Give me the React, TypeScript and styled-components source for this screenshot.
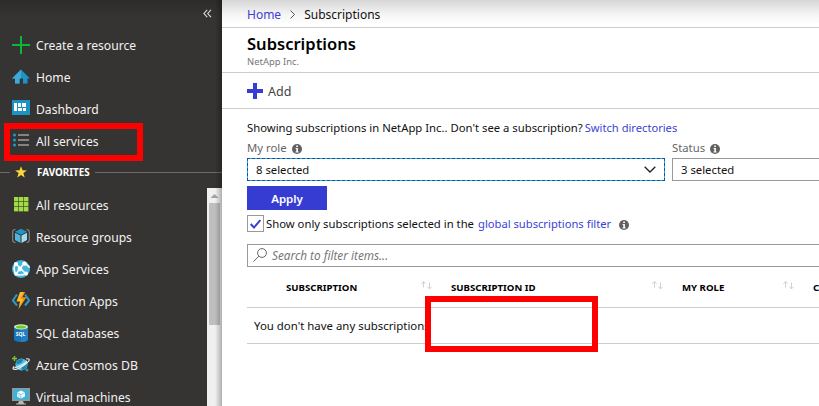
import React from "react";
import styled, { createGlobalStyle } from "styled-components";

const GlobalStyle = createGlobalStyle`
  * { box-sizing: border-box; }
  body { margin: 0; overflow: hidden; background: #fff; }
  svg { display: block; flex: none; }
`;

const Page = styled.div`
  position: relative;
  display: flex;
  width: 819px;
  height: 406px;
  overflow: hidden;
  background: #fff;
  color: #111;
  font-family: "Noto Sans", "Open Sans", sans-serif;
  font-size: 11.3px;
  white-space: nowrap;
`;

/* Sidebar */
const Sidebar = styled.nav`
  position: relative;
  flex: none;
  width: 222px;
  height: 406px;
  display: flex;
  flex-direction: column;
  background: #363432;
  color: #f2f2f2;
  overflow: hidden;
`;
const EdgeShade = styled.div`
  position: absolute;
  top: 0;
  right: 0;
  width: 7px;
  height: 100%;
  background: linear-gradient(to right, rgba(0, 0, 0, 0), rgba(0, 0, 0, 0.27));
`;
const TopShade = styled.div`
  position: absolute;
  top: 0;
  left: 0;
  width: 100%;
  height: 18px;
  background: linear-gradient(rgba(0, 0, 0, 0.16), rgba(0, 0, 0, 0));
`;
const CollapseBar = styled.div`
  height: 29px;
  padding: 9px 10px 0 0;
  display: flex;
  justify-content: flex-end;
`;
const NavItem = styled.div`
  height: 32px;
  flex: none;
  display: flex;
  align-items: center;
  gap: 6px;
  padding-left: 12px;
`;
const NavLabel = styled.span<{ $size?: number }>`
  font-size: ${(p) => p.$size ?? 12.13}px;
  line-height: 18px;
  padding-top: 1px;
`;
const Favorites = styled.div`
  display: flex;
  align-items: center;
  height: 31px;
  padding-bottom: 1px;
  color: #fff;
  font-size: 9.85px;
  font-weight: 700;
`;
const Rule = styled.div<{ $width: number }>`
  width: ${(p) => p.$width}px;
  height: 1px;
  background: #6b6967;
`;
const StarSlot = styled.span`
  margin-left: 5px;
`;
const FavoritesTitle = styled.span`
  width: 58px;
  margin-left: 10px;
`;
const FavoritesBody = styled.div`
  display: flex;
  flex: 1;
  min-height: 0;
`;
const FavoritesList = styled.div`
  width: 207px;
  padding-top: 1px;
`;
const ScrollTrack = styled.div`
  width: 15px;
  height: 218px;
  display: flex;
  flex-direction: column;
  align-items: flex-start;
  padding: 6px 0 0 2px;
  background: #f0f0f0;
`;
const ScrollThumb = styled.div`
  width: 11px;
  height: 122px;
  margin-top: 5px;
  background: #bfbfbf;
`;

/* Main area */
const Main = styled.main`
  flex: 1;
  min-width: 0;
  display: flex;
  flex-direction: column;
  overflow: hidden;
`;
const Breadcrumb = styled.div`
  height: 28px;
  display: flex;
  align-items: center;
  padding: 2px 0 0 25px;
  border-bottom: 1px solid #cdcdcd;
  background: linear-gradient(#d6d6d6, #f4f4f4 14px, #fff 24px);
  font-size: 12px;
  color: #111;
`;
const Link = styled.a`
  color: #3b3fd4;
`;
const Crumb = styled.span`
  margin-left: 9px;
`;
const CrumbArrow = styled.span`
  margin-left: 9px;
`;
const Heading = styled.header`
  height: 45px;
  padding: 3px 0 0 25px;
  border-bottom: 1px solid #cdcdcd;
`;
const Title = styled.h1`
  margin: 0;
  font-size: 16.55px;
  line-height: 26px;
  font-weight: 600;
  color: #000;
`;
const Subtitle = styled.div`
  font-size: 9.45px;
  line-height: 13px;
  color: #777;
  margin-top: -2px;
`;
const Toolbar = styled.div`
  height: 36px;
  display: flex;
  align-items: center;
  gap: 5px;
  padding-left: 25px;
  border-bottom: 1px solid #cdcdcd;
  font-size: 12.5px;
  color: #444;
`;
const ToolbarLabel = styled.span`
  padding-top: 2px;
`;
const Content = styled.section`
  padding: 9px 0 0 25px;
`;
const Notice = styled.p`
  margin: 0;
  height: 20px;
  line-height: 19px;
  display: flex;
  gap: 2px;
`;
const NoticeLink = styled(Link)`
  font-size: 11.15px;
`;
const Filters = styled.div`
  display: flex;
  gap: 7px;
`;
const Field = styled.div`
  flex: none;
  width: 418px;
`;
const FieldLabel = styled.div`
  height: 20px;
  padding-bottom: 1px;
  display: flex;
  align-items: center;
  gap: 5px;
  color: #666;
`;
const SelectBox = styled.div<{ $focused?: boolean }>`
  height: 23px;
  display: flex;
  align-items: center;
  justify-content: space-between;
  padding: 0 8px;
  border: 1px ${(p) => (p.$focused ? "dashed #1b4f9c" : "solid #999")};
  background: ${(p) => (p.$focused ? "linear-gradient(#fff, #fff) padding-box, #14b8ee border-box" : "#fff")};
  color: #111;
`;
const ApplyButton = styled.button`
  display: flex;
  align-items: center;
  justify-content: center;
  width: 80px;
  height: 24px;
  margin: 5px 0 0;
  padding: 0;
  border: 0;
  background: #363cd2;
  color: #fff;
  font: 600 11.5px "Noto Sans", sans-serif;
`;
const CheckRow = styled.div`
  display: flex;
  align-items: center;
  height: 17px;
  margin-top: 5px;
`;
const Checkbox = styled.span`
  width: 17px;
  height: 17px;
  display: flex;
  align-items: center;
  justify-content: center;
  border: 1px solid #999;
  margin-right: 2px;
`;
const FilterLink = styled(Link)`
  margin: 0 8px 0 4px;
  font-size: 11.2px;
`;
const InfoSlot = styled.span`
  padding-top: 2px;
`;
const SearchBox = styled.div`
  height: 23px;
  display: flex;
  align-items: center;
  gap: 5px;
  margin-top: 12px;
  padding: 0 0 1px 5px;
  border: 1px solid #999;
  border-right: 0;
  color: #777;
  font-size: 11.75px;
  font-style: italic;
`;
const TableHead = styled.div`
  display: grid;
  grid-template-columns: 204px 231px 131px 60px;
  align-items: center;
  width: 626px;
  height: 41px;
  border-bottom: 1px solid #cdcdcd;
  font-size: 9.65px;
  font-weight: 700;
  color: #000;
`;
const HeadCell = styled.div<{ $indent?: number }>`
  display: flex;
  justify-content: space-between;
  align-items: center;
  padding: 0 19px 0 ${(p) => p.$indent ?? 0}px;
`;
const SortSlot = styled.span`
  padding-bottom: 3px;
`;
const TableRow = styled.div`
  height: 36px;
  display: flex;
  align-items: center;
  padding: 0 0 1px 7px;
  border-bottom: 1px solid #cdcdcd;
  font-size: 11.42px;
`;

/* Red callouts drawn over the portal */
const Callout = styled.div<{ $x: number; $y: number; $w: number; $h: number }>`
  position: absolute;
  left: ${(p) => p.$x}px;
  top: ${(p) => p.$y}px;
  width: ${(p) => p.$w}px;
  height: ${(p) => p.$h}px;
  border: 6px solid #fe0000;
`;

const Svg = ({ children }: { children: React.ReactNode }) => (
  <svg width="18" height="18" viewBox="0 0 18 18">{children}</svg>
);
const PlusIcon = () => (
  <Svg><path d="M8 0h2v8h8v2h-8v8H8v-8H0V8h8z" fill="#08b836" /></Svg>
);
const HomeIcon = () => (
  <Svg>
    <path d="M9 1.500 18 10.500H15.500V15.500H11v-5H7.500v5H3v-5H0z" fill="#1c94c4" />
    <path d="M9 1.500 0 10.500h3v5h4.500v-5H9z" fill="#3daad6" />
  </Svg>
);
const DashboardIcon = () => (
  <Svg>
    <path d="M0 0h18v15H0z" fill="#1b93c5" />
    <path d="M2 3h3v8H2zM6 3h3v4H6zM10 3h4v4h-4zM6 8h4v3H6zM11 8h3v3h-3z" fill="#fff" />
  </Svg>
);
const ServicesIcon = () => (
  <Svg>
    <path d="M6 3h11M6 8h11M6 13h11" stroke="#858381" strokeWidth="2" />
    <g fill="#1f9bcb"><circle cx="2.500" cy="3" r="1.500" /><circle cx="2.500" cy="8" r="1.500" /><circle cx="2.500" cy="13" r="1.500" /></g>
  </Svg>
);
const StarIcon = () => (
  <svg width="12" height="12" viewBox="0 0 12 12">
    <path d="m6 .2 1.500 4.100 4.400.1-3.500 2.700 1.300 4.500L6 9.100l-3.700 2.500 1.300-4.500L.1 4.400l4.400-.1z" fill="#fdd43b" />
  </svg>
);
const GridIcon = () => (
  <Svg>
    {[1, 6, 11].map((y) => [2, 7, 12].map((x) => (
      <rect key={`${x}-${y}`} x={x} y={y} width="4.400" height="4.400" fill="#a1dc42" />
    )))}
  </Svg>
);
const GroupIcon = () => (
  <Svg>
    <path d="M3.500 1.500C1.500 1.500.7 2.500.7 4v8c0 1.500.8 2.500 2.800 2.500M14.500 1.500c2 0 2.800 1 2.800 2.500v8c0 1.500-.8 2.500-2.800 2.500" fill="none" stroke="#888" strokeWidth="1.100" />
    <path d="m9 .8 6 3-6 3-6-3z" fill="#1d96c7" />
    <path d="M3 4.800 8.500 7.500V15L3 12z" fill="#4fb5dc" />
    <path d="M15 4.800 9.500 7.500V15l5.500-3z" fill="#a2dcef" />
  </Svg>
);
const AppServiceIcon = () => (
  <Svg>
    <circle cx="9" cy="9" r="9" fill="#45b5d9" />
    <g stroke="#eef9fc" fill="none" strokeWidth="1.700">
      <path d="m4 4 10 10M12.500 3 7.500 9M4 14l3.500-5M3.500 4.500C1.500 7 1.800 10 3.500 13.500M12 4c3 .2 4.500 1.800 5.500 3.700M5 14.500c3.500 1 6 .6 9-1" />
    </g>
    <g fill="#fff"><circle cx="4" cy="4" r="2.100" /><circle cx="12.500" cy="3.600" r="2.200" /><circle cx="8" cy="9" r="2.400" /><circle cx="4" cy="14" r="1.800" /><circle cx="14" cy="13.500" r="2" /></g>
  </Svg>
);
const FunctionIcon = () => (
  <Svg>
    <path d="M5 2.500.9 8.500l4.100 5M13 2.500l4.100 6-4.100 5" fill="none" stroke="#3199c4" strokeWidth="2" />
    <path d="M8 0h5l-3 5.500h4L6.500 17 8 9.500H4.500z" fill="#fdbd26" />
    <path d="M11.800 0H13l-3 5.500h4L6.500 17l5-10H8.500z" fill="#f08a20" />
  </Svg>
);
const SmallText = styled.text`
  font: 700 5px "Noto Sans", sans-serif;
  fill: #fff;
`;
const SqlIcon = () => (
  <Svg>
    <path d="M2 3v12c0 1.700 3 3 7 3s7-1.300 7-3V3z" fill="#1773ba" />
    <path d="M9 3h7v12c0 1.700-3 3-7 3z" fill="#2480c5" />
    <ellipse cx="9" cy="2.800" rx="7" ry="2.600" fill="#d3edb0" />
    <ellipse cx="9" cy="3" rx="5" ry="1.500" fill="#72c92e" />
    <SmallText x="3.700" y="12.300">SQL</SmallText>
  </Svg>
);
const CosmosIcon = () => (
  <Svg>
    <circle cx="9.500" cy="8.500" r="6.100" fill="#4fc0df" />
    <path d="M4.500 5c3-2 5-2 7-1.500L9 7 4.500 8.500zM9.500 10c2-2 4-2.500 6-2-1 4-3 6-5.500 6z" fill="#247fae" />
    <path d="M14 3c3-.7 4 .3 2.500 2.500C14.500 8 8 12.500 4 13.300c-3 .5-3.800-.5-2-3M15 5C12 8.500 7 10.800 2.500 11.600" fill="none" stroke="#dbeff5" strokeWidth="1.200" />
    <path d="M2.500 0v5M0 2.500h5" stroke="#77c72e" strokeWidth="1.400" />
    <path d="M15 12.500v3M13.500 14h3" stroke="#36aed5" strokeWidth="1" />
  </Svg>
);
const VmIcon = () => (
  <Svg>
    <path d="M0 0h18v13H0z" fill="#92999b" />
    <path d="M1.500 1.500h15v10h-15z" fill="#37b4db" />
    <path d="M7 13h4l1 2.500h2v1H4v-1h2z" fill="#b6babb" />
    <path d="m9 2.500 4 2v4l-4 2-4-2v-4z" fill="#fff" />
    <path d="m5 4.500 4 2v4l-4-2z" fill="#c8edf7" />
    <path d="m5 4.500 4 2 4-2M9 6.500v4" stroke="#62c2df" strokeWidth=".7" fill="none" />
  </Svg>
);
const InfoIcon = () => (
  <InfoSlot>
    <svg width="10" height="10" viewBox="0 0 10 10">
      <circle cx="5" cy="5" r="5" fill="#606060" />
      <path d="M4.200 1.500h1.700v1.500H4.200zM3.600 4h2.300v3.500h.7v1H3.500v-1h.8V5h-.7z" fill="#fff" />
    </svg>
  </InfoSlot>
);
const SortIcon = () => (
  <SortSlot>
    <svg width="11" height="9" viewBox="0 0 11 9">
      <path d="M2.500 6.500V.7M.3 2.800 2.500.6l2.200 2.200M8.500 1.500v6.300M6.300 5.700l2.200 2.200 2.200-2.200" fill="none" stroke="#d0d0d0" strokeWidth="1" />
    </svg>
  </SortSlot>
);

const primary: [string, React.FC][] = [
  ["Create a resource", PlusIcon],
  ["Home", HomeIcon],
  ["Dashboard", DashboardIcon],
  ["All services", ServicesIcon],
];
const favorites: [string, React.FC, number?][] = [
  ["All resources", GridIcon],
  ["Resource groups", GroupIcon],
  ["App Services", AppServiceIcon, 12.25],
  ["Function Apps", FunctionIcon, 12.25],
  ["SQL databases", SqlIcon, 12.05],
  ["Azure Cosmos DB", CosmosIcon, 12.25],
  ["Virtual machines", VmIcon, 12.05],
];

export default function App() {
  return (
    <>
      <GlobalStyle />
      <Page>
        <Sidebar>
          <CollapseBar>
            <svg width="9" height="9" viewBox="0 0 9 9">
              <path d="M4.200.8.900 4.500l3.300 3.700M8 .8 4.700 4.500 8 8.200" fill="none" stroke="#e8e8e8" strokeWidth="1.100" />
            </svg>
          </CollapseBar>
          {primary.map(([label, Icon]) => (
            <NavItem key={label}><Icon /><NavLabel>{label}</NavLabel></NavItem>
          ))}
          <Favorites>
            <Rule $width={10} />
            <StarSlot><StarIcon /></StarSlot>
            <FavoritesTitle>FAVORITES</FavoritesTitle>
            <Rule $width={127} />
          </Favorites>
          <FavoritesBody>
            <FavoritesList>
              {favorites.map(([label, Icon, size]) => (
                <NavItem key={label}><Icon /><NavLabel $size={size}>{label}</NavLabel></NavItem>
              ))}
            </FavoritesList>
            <ScrollTrack>
              <svg width="11" height="4" viewBox="0 0 11 4"><path d="m5.500 0 4 4h-8z" fill="#a3a3a3" /></svg>
              <ScrollThumb />
            </ScrollTrack>
          </FavoritesBody>
          <EdgeShade />
          <TopShade />
        </Sidebar>
        <Main>
          <Breadcrumb>
            <Link>Home</Link>
            <CrumbArrow>
              <svg width="5" height="9" viewBox="0 0 5 9"><path d="m.5.500 4 4-4 4" fill="none" stroke="#555" /></svg>
            </CrumbArrow>
            <Crumb>Subscriptions</Crumb>
          </Breadcrumb>
          <Heading>
            <Title>Subscriptions</Title>
            <Subtitle>NetApp Inc.</Subtitle>
          </Heading>
          <Toolbar>
            <svg width="16" height="16" viewBox="0 0 16 16"><path d="M6 0h4v6h6v4h-6v6H6v-6H0V6h6z" fill="#373dd3" /></svg>
            <ToolbarLabel>Add</ToolbarLabel>
          </Toolbar>
          <Content>
            <Notice>
              <span>Showing subscriptions in NetApp Inc.. Don't see a subscription?</span>
              <NoticeLink>Switch directories</NoticeLink>
            </Notice>
            <Filters>
              <Field>
                <FieldLabel>My role <InfoIcon /></FieldLabel>
                <SelectBox $focused>
                  8 selected
                  <svg width="12" height="7" viewBox="0 0 12 7"><path d="m.7.700 5.300 5.300L11.300.7" fill="none" stroke="#222" strokeWidth="1.300" /></svg>
                </SelectBox>
              </Field>
              <Field>
                <FieldLabel>Status <InfoIcon /></FieldLabel>
                <SelectBox>3 selected</SelectBox>
              </Field>
            </Filters>
            <ApplyButton>Apply</ApplyButton>
            <CheckRow>
              <Checkbox>
                <svg width="11" height="10" viewBox="0 0 11 10"><path d="m.7 5 3.300 3.500L10.300 1" fill="none" stroke="#373dd3" strokeWidth="1.900" /></svg>
              </Checkbox>
              <span>Show only subscriptions selected in the</span>
              <FilterLink>global subscriptions filter</FilterLink>
              <InfoIcon />
            </CheckRow>
            <SearchBox>
              <svg width="14" height="14" viewBox="0 0 14 14"><circle cx="9" cy="5" r="4.400" fill="none" stroke="#666" /><path d="M5.800 8.200.4 13.600" stroke="#666" /></svg>
              Search to filter items...
            </SearchBox>
            <TableHead>
              <HeadCell $indent={39}>SUBSCRIPTION <SortIcon /></HeadCell>
              <HeadCell>SUBSCRIPTION ID <SortIcon /></HeadCell>
              <HeadCell>MY ROLE <SortIcon /></HeadCell>
              <HeadCell>C</HeadCell>
            </TableHead>
            <TableRow>You don't have any subscriptions</TableRow>
          </Content>
        </Main>
        <Callout $x={4} $y={123} $w={139} $h={38} />
        <Callout $x={425} $y={296} $w={173} $h={56} />
      </Page>
    </>
  );
}
